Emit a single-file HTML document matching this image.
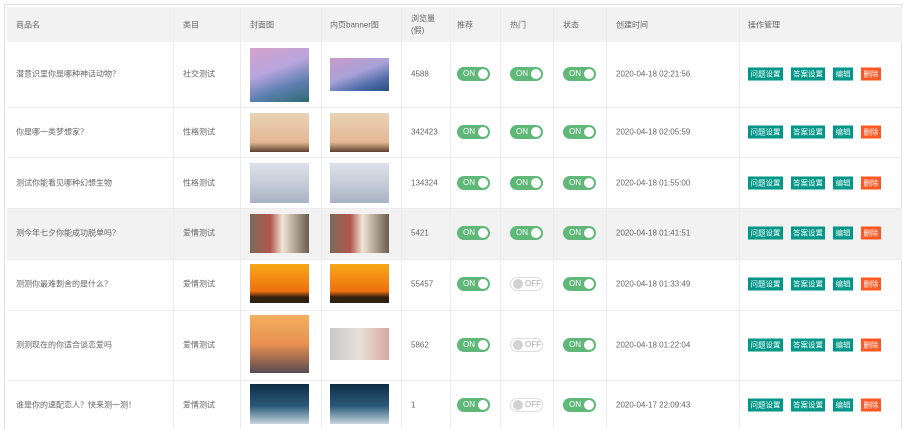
<!DOCTYPE html><html><head><meta charset="utf-8"><style>
body{margin:0;width:906px;height:429px;overflow:hidden;background:#fff;font-family:"Liberation Sans","Noto Sans CJK SC",sans-serif;font-size:8px;color:#666;position:relative}
.a{position:absolute}
.v{position:absolute;top:7px;width:1px;height:422px;background:#ececec}
.h{position:absolute;left:7px;width:895px;height:1px;background:#ececec}
.t{position:absolute;white-space:nowrap;transform:translateY(-50%)}
.sw{position:absolute;width:33px;height:14px;border-radius:7px;background:#5fb878;transform:translateY(-50%)}
.sw span{position:absolute;left:6px;top:0;color:#fff;font-size:8px;line-height:14px}
.sw i{position:absolute;right:2px;top:2px;width:10px;height:10px;border-radius:50%;background:#fff}
.off{background:#fff;border:1px solid #ddd;width:31px;height:12px}
.off span{left:14px;top:0;line-height:12px;color:#aaa}
.off i{left:2px;top:1px;background:#d2d2d2}
.b{position:absolute;height:13px;line-height:13px;color:#fff;font-size:7.5px;text-align:center;background:#009688;transform:translateY(-50%)}
</style></head><body>
<div class="a" style="left:4px;top:4px;width:898px;height:425px;border:1px solid #e0e0e0;border-bottom:none;box-sizing:border-box"></div>
<div class="a" style="left:7px;top:7px;width:895px;height:35px;background:#f2f2f2"></div>
<div class="a" style="left:7px;top:208px;width:895px;height:51px;background:#f2f2f2"></div>
<div class="v" style="left:173px"></div><div class="v" style="left:240px"></div><div class="v" style="left:321px"></div><div class="v" style="left:401px"></div><div class="v" style="left:450px"></div><div class="v" style="left:500px"></div><div class="v" style="left:553px"></div><div class="v" style="left:606px"></div><div class="v" style="left:739px"></div>
<div class="h" style="top:107px"></div><div class="h" style="top:157px"></div><div class="h" style="top:208px"></div><div class="h" style="top:259px"></div><div class="h" style="top:310px"></div><div class="h" style="top:380px"></div>
<div class="t" style="left:16px;top:25px">商品名</div><div class="t" style="left:183px;top:25px">类目</div><div class="t" style="left:250px;top:25px">封面图</div><div class="t" style="left:330px;top:25px">内页banner图</div>
<div class="t" style="left:411px;top:25px;line-height:12px">浏览量<br>(假)</div><div class="t" style="left:457px;top:25px">推荐</div><div class="t" style="left:510px;top:25px">热门</div><div class="t" style="left:563px;top:25px">状态</div><div class="t" style="left:616px;top:25px">创建时间</div><div class="t" style="left:748px;top:25px">操作管理</div>

<div class="a" style="left:250px;top:48px;width:59px;height:54px;background:linear-gradient(160deg,#d6a0c8,#b9a6de 40%,#5c7fb0 70%,#2e6a70)"></div>
<div class="a" style="left:330px;top:58px;width:59px;height:33px;background:linear-gradient(160deg,#c89ac8,#a8a2d8 45%,#4e6ca8 75%,#2a4e80)"></div>
<div class="a" style="left:250px;top:113px;width:59px;height:39px;background:linear-gradient(180deg,#e9d2b6,#e4b894 75%,#5a4030)"></div>
<div class="a" style="left:330px;top:113px;width:59px;height:39px;background:linear-gradient(180deg,#e9d2b6,#e4b894 75%,#5a4030)"></div>
<div class="a" style="left:250px;top:163px;width:59px;height:40px;background:linear-gradient(180deg,#dde1ea,#c6cdd9 50%,#a7b3c4)"></div>
<div class="a" style="left:330px;top:163px;width:59px;height:40px;background:linear-gradient(180deg,#dde1ea,#c6cdd9 50%,#a7b3c4)"></div>
<div class="a" style="left:250px;top:214px;width:59px;height:39px;background:linear-gradient(90deg,#7a6a58,#b5564e 35%,#efe6d6 55%,#6c5c4a)"></div>
<div class="a" style="left:330px;top:214px;width:59px;height:39px;background:linear-gradient(90deg,#7a6a58,#b5564e 35%,#efe6d6 55%,#6c5c4a)"></div>
<div class="a" style="left:250px;top:264px;width:59px;height:39px;background:linear-gradient(180deg,#f7a818,#f07010 70%,#302010 85%)"></div>
<div class="a" style="left:330px;top:264px;width:59px;height:39px;background:linear-gradient(180deg,#f7a818,#f07010 70%,#302010 85%)"></div>
<div class="a" style="left:250px;top:315px;width:59px;height:58px;background:linear-gradient(180deg,#f2b060,#e89050 50%,#5a4a50)"></div>
<div class="a" style="left:330px;top:328px;width:59px;height:32px;background:linear-gradient(90deg,#c8c8c8,#e8e0d8 50%,#d8a8a0)"></div>
<div class="a" style="left:250px;top:384px;width:59px;height:40px;background:linear-gradient(180deg,#0e2c44,#2a5a7a 55%,#c8d4dc)"></div>
<div class="a" style="left:330px;top:384px;width:59px;height:40px;background:linear-gradient(180deg,#0e2c44,#2a5a7a 55%,#c8d4dc)"></div>

<div id="rows"></div>
<script>
var R=[[74,"潜意识里你是哪种神话动物？","社交测试","4588",1,"2020-04-18 02:21:56"],[132,"你是哪一类梦想家？","性格测试","342423",1,"2020-04-18 02:05:59"],[183,"测试你能看见哪种幻想生物","性格测试","134324",1,"2020-04-18 01:55:00"],[233,"测今年七夕你能成功脱单吗？","爱情测试","5421",1,"2020-04-18 01:41:51"],[284,"测测你最难割舍的是什么？","爱情测试","55457",0,"2020-04-18 01:33:49"],[345,"测测现在的你适合谈恋爱吗","爱情测试","5862",0,"2020-04-18 01:22:04"],[405,"谁是你的速配恋人？快来测一测！","爱情测试","1",0,"2020-04-17 22:09:43"]];
var h="",on='<span>ON</span><i></i>';
R.forEach(function(r){var y=r[0];
h+='<div class="t" style="left:16px;top:'+y+'px">'+r[1]+'</div><div class="t" style="left:183px;top:'+y+'px">'+r[2]+'</div><div class="t" style="left:411px;top:'+y+'px">'+r[3]+'</div>';
h+='<div class="sw" style="left:457px;top:'+y+'px">'+on+'</div>';
h+=r[4]?'<div class="sw" style="left:510px;top:'+y+'px">'+on+'</div>':'<div class="sw off" style="left:510px;top:'+y+'px"><i></i><span>OFF</span></div>';
h+='<div class="sw" style="left:563px;top:'+y+'px">'+on+'</div><div class="t" style="left:616px;top:'+y+'px">'+r[5]+'</div>';
h+='<div class="b" style="left:748px;width:35px;top:'+y+'px">问题设置</div><div class="b" style="left:791px;width:34px;top:'+y+'px">答案设置</div><div class="b" style="left:833px;width:20px;top:'+y+'px">编辑</div><div class="b" style="left:861px;width:20px;background:#ff5722;top:'+y+'px">删除</div>';});
document.getElementById("rows").innerHTML=h;
</script>
</body></html>
